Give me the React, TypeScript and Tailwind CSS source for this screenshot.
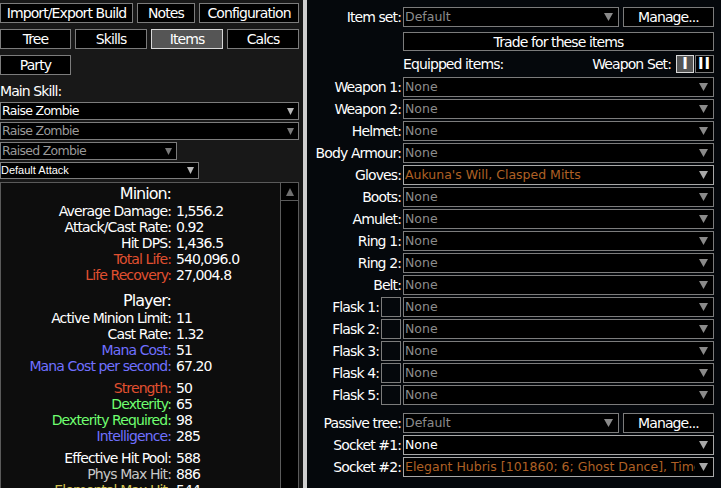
import clsx from "clsx";

const Arrow = ({ color = "#8a8a8a", w = 9, h = 8 }: { color?: string; w?: number; h?: number }) => (
  <svg width={w} height={h} viewBox={`0 0 ${w} ${h}`} className="shrink-0">
    <path d={`M0 0H${w}L${w / 2} ${h}Z`} fill={color} />
  </svg>
);

function Btn({ label, className, active }: { label: string; className: string; active?: boolean }) {
  return (
    <div
      className={clsx(
        "flex h-[20px] items-center justify-center border text-[14px] leading-[16px] tracking-[-0.9px] text-white",
        active ? "border-[#d8d8d8] bg-[#555555]" : "border-[#7c7c7c] bg-black",
        className
      )}
    >
      {label}
    </div>
  );
}

function LeftSelect({
  text,
  className,
  muted,
  small,
}: {
  text: string;
  className: string;
  muted?: boolean;
  small?: boolean;
}) {
  return (
    <div className={clsx("flex items-center border border-[#7c7c7c] bg-black pr-[4px]", className)}>
      <span
        className={clsx(
          "flex-1 overflow-hidden whitespace-nowrap",
          small
            ? "pl-0 font-['Liberation_Sans',sans-serif] text-[11px] tracking-normal"
            : "pl-[1px] text-[12.5px] tracking-[-0.7px]",
          muted ? "text-[#9a9a9a]" : "text-white"
        )}
      >
        {text}
      </span>
      <Arrow color={muted ? "#7a7a7a" : "#b8b8b8"} w={7} h={7} />
    </div>
  );
}

function Stat({ label, value, color = "text-white" }: { label: string; value: string; color?: string }) {
  return (
    <div className="flex h-[16px] items-center text-[14px] leading-[16px] tracking-[-0.9px]">
      <div className={clsx("w-[170px] text-right", color)}>{label}:</div>
      <div className="pl-[5px] text-white">{value}</div>
    </div>
  );
}

function Header({ label }: { label: string }) {
  return (
    <div className="h-[18px] w-[170px] text-right text-[16px] leading-[18px] tracking-[-1px] text-white">
      {label}
    </div>
  );
}

function RSelect({
  text,
  className,
  color = "text-[#8c8c8c]",
  border = "border-[#7c7c7c]",
  arrow = "#8a8a8a",
}: {
  text: string;
  className: string;
  color?: string;
  border?: string;
  arrow?: string;
}) {
  return (
    <div className={clsx("flex h-full items-center border bg-black pl-[1px] pr-[5px]", border, className)}>
      <span className={clsx("mr-[4px] flex-1 overflow-hidden whitespace-nowrap text-[12.5px] leading-[16px]", color)}>
        {text}
      </span>
      <Arrow color={arrow} />
    </div>
  );
}

function ItemRow({
  label,
  value,
  unique,
  flask,
  bright,
}: {
  label: string;
  value: string;
  unique?: boolean;
  flask?: boolean;
  bright?: boolean;
}) {
  return (
    <div className="flex h-[20px] items-center">
      <div className="flex w-[96px] items-center justify-end">
        <span className="pr-[2px] text-[14px] leading-[16px] tracking-[-0.9px] text-white">{label}:</span>
        {flask && <div className="mr-[2px] h-[20px] w-[20px] border border-[#7c7c7c]" />}
      </div>
      <RSelect
        text={value}
        className="w-[311px]"
        color={unique ? "text-[#af6025]" : bright ? "text-white" : "text-[#8c8c8c]"}
        border={unique || bright ? "border-[#a8a8a8]" : "border-[#7c7c7c]"}
        arrow={unique || bright ? "#a8a8a8" : "#8a8a8a"}
      />
    </div>
  );
}

const slots = [
  "Weapon 1",
  "Weapon 2",
  "Helmet",
  "Body Armour",
  "Gloves",
  "Boots",
  "Amulet",
  "Ring 1",
  "Ring 2",
  "Belt",
];

export default function App() {
  return (
    <div className="flex h-[488px] w-[721px] overflow-hidden font-['DejaVu_Sans',sans-serif] text-white">
      {/* Left side: build tabs and stats */}
      <div className="flex w-[303px] shrink-0 flex-col bg-[#181818] pt-[3px]">
        <div className="flex gap-[4px]">
          <Btn label="Import/Export Build" className="w-[133px]" />
          <Btn label="Notes" className="w-[58px]" />
          <Btn label="Configuration" className="w-[100px]" />
        </div>
        <div className="mt-[6px] flex gap-[4px]">
          <Btn label="Tree" className="w-[71px]" />
          <Btn label="Skills" className="w-[72px]" />
          <Btn label="Items" className="w-[72px]" active />
          <Btn label="Calcs" className="w-[72px]" />
        </div>
        <div className="mt-[6px] flex">
          <Btn label="Party" className="w-[71px]" />
        </div>
        <div className="mt-[8px] h-[16px] text-[14px] leading-[16px] tracking-[-0.9px]">Main Skill:</div>
        <LeftSelect text="Raise Zombie" className="mt-[3px] h-[18px] w-[299px]" />
        <LeftSelect text="Raise Zombie" className="mt-[2px] h-[18px] w-[299px]" muted />
        <LeftSelect text="Raised Zombie" className="mt-[2px] h-[18px] w-[177px]" muted />
        <LeftSelect text="Default Attack" className="mt-[2px] h-[17px] w-[199px]" small />

        <div className="mt-[3px] flex h-[320px] w-[299px] shrink-0 border border-[#5a5a5a] bg-[#0d0d0d]">
          <div className="flex-1 pt-[2px]">
            <Header label="Minion:" />
            <Stat label="Average Damage" value="1,556.2" />
            <Stat label="Attack/Cast Rate" value="0.92" />
            <Stat label="Hit DPS" value="1,436.5" />
            <Stat label="Total Life" value="540,096.0" color="text-[#e05030]" />
            <Stat label="Life Recovery" value="27,004.8" color="text-[#e05030]" />
            <div className="h-[9px]" />
            <Header label="Player:" />
            <Stat label="Active Minion Limit" value="11" />
            <Stat label="Cast Rate" value="1.32" />
            <Stat label="Mana Cost" value="51" color="text-[#7070ff]" />
            <Stat label="Mana Cost per second" value="67.20" color="text-[#7070ff]" />
            <div className="h-[6px]" />
            <Stat label="Strength" value="50" color="text-[#e05030]" />
            <Stat label="Dexterity" value="65" color="text-[#70ff70]" />
            <Stat label="Dexterity Required" value="98" color="text-[#70ff70]" />
            <Stat label="Intelligence" value="285" color="text-[#7070ff]" />
            <div className="h-[6px]" />
            <Stat label="Effective Hit Pool" value="588" />
            <Stat label="Phys Max Hit" value="886" color="text-[#c8c8c8]" />
            <Stat label="Elemental Max Hit" value="544" color="text-[#d0c050]" />
          </div>
          <div className="flex w-[18px] flex-col border-l border-[#5a5a5a] bg-black">
            <div className="flex h-[18px] items-center justify-center border-b border-[#5a5a5a]">
              <svg width="8" height="8" viewBox="0 0 8 8">
                <path d="M4 0L8 8H0Z" fill="#707070" />
              </svg>
            </div>
          </div>
        </div>
      </div>

      {/* Divider */}
      <div className="w-[4px] shrink-0 bg-[#cfcfcf]" />

      {/* Right side: items */}
      <div className="flex flex-1 flex-col bg-[#05080c] pt-[7px]">
        <div className="flex h-[20px] items-center">
          <div className="w-[96px] pr-[2px] text-right text-[14px] leading-[16px] tracking-[-0.9px]">Item set:</div>
          <RSelect text="Default" className="w-[216px]" />
          <Btn label="Manage..." className="ml-[4px] w-[91px]" />
        </div>
        <div className="ml-[96px] mt-[5px] flex h-[19px] w-[311px] items-center justify-center border border-[#7c7c7c] bg-black text-[14px] leading-[16px] tracking-[-0.9px]">
          Trade for these items
        </div>
        <div className="ml-[96px] mt-[4px] flex h-[18px] w-[311px] items-center text-[14px] leading-[16px] tracking-[-0.9px]">
          <span className="flex-1">Equipped items:</span>
          <span className="mr-[5px]">Weapon Set:</span>
          <div className="flex h-[18px] w-[18px] items-center justify-center border border-[#d8d8d8] bg-[#555555] text-[15px] font-bold tracking-normal">
            I
          </div>
          <div className="ml-[1px] flex h-[18px] w-[19px] items-center justify-center border border-[#7c7c7c] bg-black text-[15px] font-bold tracking-[1px]">
            II
          </div>
        </div>

        <div className="mt-[4px] flex flex-col gap-[2px]">
          {slots.map((s) => (
            <ItemRow key={s} label={s} value={s === "Gloves" ? "Aukuna's Will, Clasped Mitts" : "None"} unique={s === "Gloves"} />
          ))}
          {[1, 2, 3, 4, 5].map((n) => (
            <ItemRow key={n} label={`Flask ${n}`} value="None" flask />
          ))}
        </div>

        <div className="mt-[8px] flex flex-col gap-[2px]">
          <div className="flex h-[20px] items-center">
            <div className="w-[96px] pr-[2px] text-right text-[14px] leading-[16px] tracking-[-0.9px]">Passive tree:</div>
            <RSelect text="Default" className="w-[216px]" />
            <Btn label="Manage..." className="ml-[4px] w-[91px]" />
          </div>
          <ItemRow label="Socket #1" value="None" bright />
          <ItemRow label="Socket #2" value="Elegant Hubris [101860; 6; Ghost Dance], Timeless Jewel" unique />
        </div>
      </div>
    </div>
  );
}
